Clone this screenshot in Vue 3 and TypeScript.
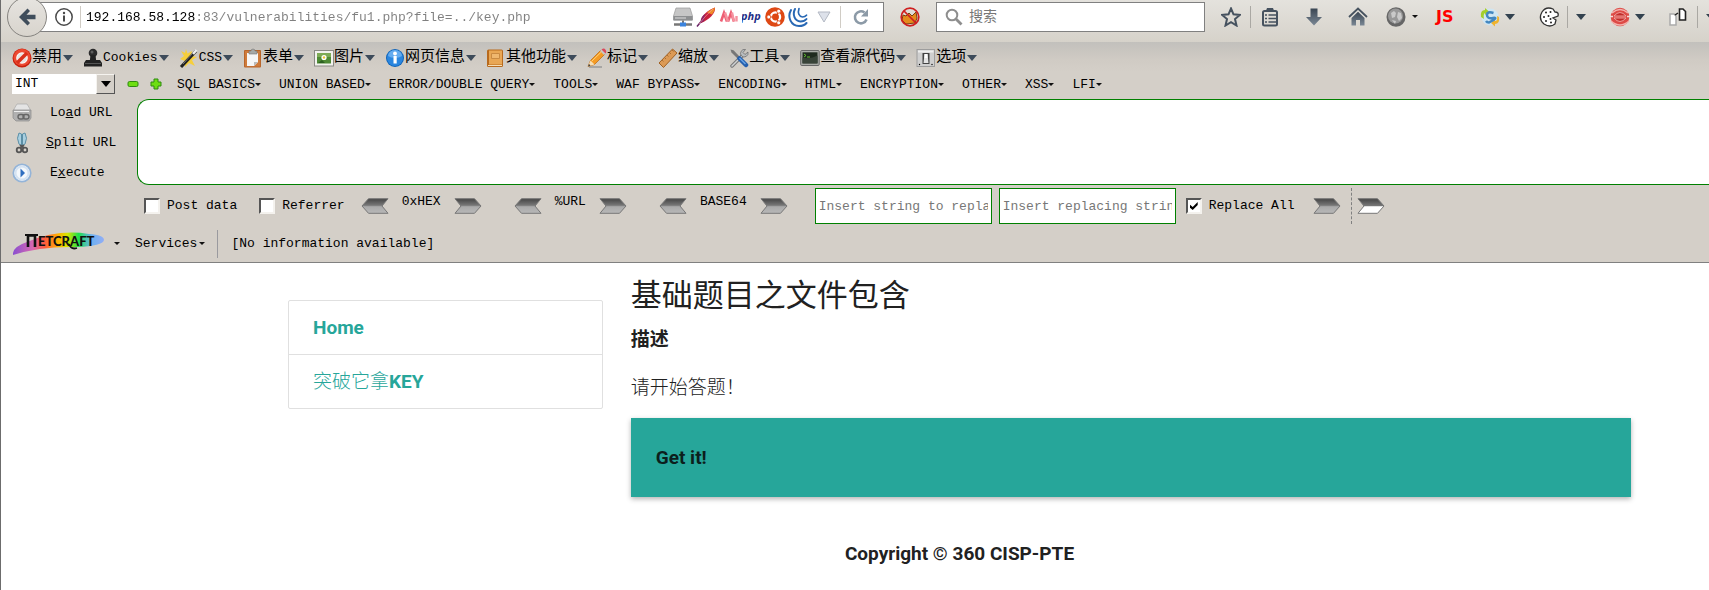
<script setup lang="ts">
import { ref } from 'vue'

interface Entry {
  label: string
  art: string
}

const address = ref('192.168.58.128:83/vulnerabilities/fu1.php?file=../key.php')
const search = ref('')
const target = ref('')
const find = ref('')
const replacement = ref('')
const dialect = ref('INT')
const postData = ref(false)
const referrer = ref(false)
const replaceAll = ref(true)

const devMenus: Entry[] = [
  {
    label: '禁用',
    art: '<circle cx="10" cy="10" r="9.5" fill="#c9200d"/><circle cx="10" cy="9.500" r="8.500" fill="#ec4a32"/><circle cx="10" cy="10" r="5.800" fill="#fff"/><circle cx="10" cy="10" r="4.800" fill="#e9e4e2"/><path d="M5 15 15 5" stroke="#d9301b" stroke-width="3.600"/>',
  },
  {
    label: 'Cookies',
    art: '<circle cx="10" cy="5" r="4.300" fill="#2b2b2b"/><path d="M7.500 7h5l.6 5H17l2 3v3.500H1V15l2-3h3.900z" fill="#222"/><path d="M2 15.500h16" stroke="#555"/><circle cx="9" cy="4" r="1.500" fill="#5d5d5d"/>',
  },
  {
    label: 'CSS',
    art: '<path d="M7 1l1.500 4.500L13 3l-1 5 6 1-5 3 3 6-6-3-4 4v-6L1 11l4-3-3-5 4 2z" fill="#f6cf3c"/><path d="M2 19 17 3" stroke="#222" stroke-width="3"/><path d="M14 6l3.500-4" stroke="#eee" stroke-width="2.500"/><path d="M4 16 13 6" stroke="#777"/>',
  },
  {
    label: '表单',
    art: '<rect x="1" y="2" width="17" height="17.500" rx="1" fill="#b8652a"/><rect x="2" y="3" width="15" height="15.500" fill="#cf7b3b"/><path d="M4 5h11v9l-4 4H4z" fill="#f6f6f6"/><path d="M11 18v-4h4z" fill="#bbb"/><path d="M6 3h2a2 2 0 0 1 4 0h2v3H6z" fill="#a7a9a6" stroke="#777" stroke-width=".6"/>',
  },
  {
    label: '图片',
    art: '<rect x=".5" y="2.500" width="19" height="15.500" fill="#f2f2ee" stroke="#8a8a84"/><rect x="3" y="5" width="14" height="10.500" fill="#4e8a35"/><path d="M3 5h14v4H3z" fill="#7dab55"/><circle cx="10" cy="9.500" r="2.600" fill="#fff"/><circle cx="10" cy="9.500" r="1.200" fill="#eac52e"/><path d="M4 15l4-3 3 3z" fill="#2c6121"/>',
  },
  {
    label: '网页信息',
    art: '<circle cx="10" cy="10" r="9" fill="#0e63b8"/><circle cx="10" cy="10" r="8" fill="#2a86df"/><path d="M3 8a7 6 0 0 1 14 0 9 5 0 0 1-14 0z" fill="#65acf0"/><rect x="8.500" y="8" width="3.200" height="7.500" fill="#fff"/><circle cx="10" cy="5.500" r="1.900" fill="#fff"/>',
  },
  {
    label: '其他功能',
    art: '<rect x="1" y="1.500" width="16" height="17.500" rx="1.500" fill="#b86a1d"/><rect x="3" y="2.500" width="13" height="14" fill="#e9a755"/><path d="M5.500 5.500h8v5h-8z" fill="#efb76f" stroke="#c98a42"/><path d="M2 17.500h14" stroke="#f7deb5"/>',
  },
  {
    label: '标记',
    art: '<path d="M2 19h13" stroke="#999" stroke-width="1.500"/><path d="M1 18.500l2.500-6L14 2l4 4L7.500 16.500z" fill="#f59b24" stroke="#b76712" stroke-width=".7"/><path d="M1 18.500l2.500-6 4 4z" fill="#f6dfb6"/><path d="M1 18.500l1-2.500 1.500 1.500z" fill="#333"/><path d="M13 3l1.500-1.500 4 4L17 7z" fill="#c7c7c7"/><path d="M14.500 1.500q2.500-2 4 .2 1.500 2 0 3.800z" fill="#da4a5c"/><path d="M5 13 14.500 3.800" stroke="#ffd277"/>',
  },
  {
    label: '缩放',
    art: '<path d="M1 15 14.500 1 19 5 5.500 19.500z" fill="#dc9a55" stroke="#a06022"/><path d="M4 12l1.500 1.500M6.500 9.500 8 11M9 7l1.500 1.500M11.500 4.500 13 6M14 2l1.500 1.500" stroke="#a86f35"/>',
  },
  {
    label: '工具',
    art: '<path d="M3 18 14 7" stroke="#777" stroke-width="3.500" stroke-linecap="round"/><path d="M3 18 14 7" stroke="#cfd2d4" stroke-width="1.500" stroke-linecap="round"/><path d="M12.500 8a4 4 0 0 1 4-6.500L14 4.500l2 2L19 4a4 4 0 0 1-6.500 4z" fill="#b7bcbf" stroke="#666" stroke-width=".7"/><path d="M1.500 1.500l3 .8 7 7.200-2 2-7-7z" fill="#777"/><path d="M10.500 10.500 17 17" stroke="#245fae" stroke-width="4.500" stroke-linecap="round"/><path d="M10.500 10 16.500 16" stroke="#67a3e6" stroke-width="1.500"/>',
  },
  {
    label: '查看源代码',
    art: '<rect x=".7" y="2.500" width="18.500" height="15" rx="1" fill="#a9aba7" stroke="#666"/><rect x="2.500" y="4.300" width="15" height="11" fill="#1f2a1f"/><path d="M2.500 9.500q8 2 15-2v8h-15z" fill="#384338"/><path d="M4 6l2 1.500L4 9M7 9h3" fill="none" stroke="#63c132"/>',
  },
  {
    label: '选项',
    art: '<rect x="1" y="1.500" width="17.500" height="17" fill="#cfcfcf" stroke="#9d9d9d"/><rect x="2" y="2.500" width="15.500" height="2" fill="#eee"/><rect x="6.500" y="5" width="7" height="11" fill="#444"/><path d="M8.500 6h3l1 9h-5z" fill="#e4e4e4"/><rect x="8.500" y="6" width="3" height="4" fill="#fff"/><circle cx="3.500" cy="16.500" r=".7"/><circle cx="16" cy="16.500" r=".7"/>',
  },
]

const identityIcons: Entry[] = [
  {
    label: 'Server',
    art: '<path d="M3 1h14l2.500 8v4H.5V9z" fill="#c6c6c6" stroke="#999" stroke-width=".7"/><path d="M.5 9h19v4.500H.5z" fill="#8d8f91"/><path d="M2 11h11" stroke="#ddd"/><path d="M1 17.500h18" stroke="#777" stroke-width="2.500"/><path d="M10 13.500v3" stroke="#777" stroke-width="2"/><rect x="7" y="15.500" width="6" height="4" fill="#3b83dd"/>',
  },
  {
    label: 'Apache',
    art: '<path d="M1 19.500Q8 10 16 3" fill="none" stroke="#6a2366" stroke-width="1.500"/><path d="M5 16C4 10 11 3 19 .5 20 6 13 13 5 16z" fill="#c8213c"/><path d="M11 5.500q4-3.500 8-5 0 4-3 7z" fill="#f08a27"/><path d="M5 16C4 12 6 9 9 7l-1 7z" fill="#8c2364"/><path d="M3 17Q9 9 17 2" fill="none" stroke="#f7a8a8" stroke-width=".6"/>',
  },
  {
    label: 'Middleware',
    art: '<path d="M2 14.500 5 6l3 8.500M9 14.500 12 6l3 8.500" fill="none" stroke="#ee5f74" stroke-width="2.600"/><path d="M6 5.500l3 9M13 5.500l2 9M17.500 9v5.500" stroke="#f5929f" stroke-width="2.400"/>',
  },
  {
    label: 'PHP',
    art: '<text x="-1" y="13" font-family="Open Sans, sans-serif" font-size="11" font-weight="700" font-style="italic" fill="#1f2e86">php</text>',
  },
  {
    label: 'Ubuntu',
    art: '<circle cx="10" cy="10" r="9.800" fill="#de4814"/><circle cx="10.500" cy="10" r="4.600" fill="none" stroke="#fff" stroke-width="2.300"/><path d="M10.500 10H4M10.500 10l4-6.500M10.500 10l4 6.500" stroke="#de4814" stroke-width="1.200"/><g fill="#fff" stroke="#de4814" stroke-width=".8"><circle cx="3.800" cy="10" r="2"/><circle cx="13.700" cy="4.200" r="2"/><circle cx="13.700" cy="15.800" r="2"/></g>',
  },
  {
    label: 'jQuery',
    art: '<g fill="none" stroke="#2868b4" stroke-linecap="round"><path d="M3 3C-1 10 3 19 11 19q5 0 7.500-3" stroke-width="2"/><path d="M7 2C4 8 7 14 12.500 14.500q4 0 6-2.500" stroke-width="2"/><path d="M11 1.500C9.500 6 11 9.500 14.500 10q2.500 0 4-1.800" stroke-width="1.700"/></g>',
  },
]

const injectMenus: string[] = [
  'SQL BASICS', 'UNION BASED', 'ERROR/DOUBLE QUERY', 'TOOLS', 'WAF BYPASS',
  'ENCODING', 'HTML', 'ENCRYPTION', 'OTHER', 'XSS', 'LFI',
]

const encoders: string[] = ['0xHEX', '%URL', 'BASE64']
</script>

<template>
  <div class="window">
    <svg class="defs" width="0" height="0" aria-hidden="true">
      <defs>
        <linearGradient id="metal" x1="0" y1="0" x2="0" y2="1">
          <stop offset="0" stop-color="#444" />
          <stop offset="0.450" stop-color="#777" />
          <stop offset="0.550" stop-color="#aaa" />
          <stop offset="1" stop-color="#b8b8b8" />
        </linearGradient>
        <linearGradient id="chrome" x1="0" y1="0" x2="0" y2="1">
          <stop offset="0" stop-color="#444" />
          <stop offset="0.480" stop-color="#777" />
          <stop offset="0.550" stop-color="#fff" />
          <stop offset="1" stop-color="#fff" />
        </linearGradient>
        <linearGradient id="slate" x1="0" y1="0" x2="0" y2="1">
          <stop offset="0" stop-color="#3a4653" />
          <stop offset="1" stop-color="#7b8895" />
        </linearGradient>
        <linearGradient id="rainbow">
          <stop offset="0" stop-color="#8a4fd0" />
          <stop offset="0.220" stop-color="#d868b0" />
          <stop offset="0.350" stop-color="#ff5a3c" />
          <stop offset="0.500" stop-color="#ffb400" />
          <stop offset="0.600" stop-color="#d4e600" />
          <stop offset="0.720" stop-color="#1ee04a" />
          <stop offset="0.860" stop-color="#6bb0f0" />
          <stop offset="1" stop-color="#93aef5" />
        </linearGradient>
      </defs>
    </svg>

    <header class="chrome">
      <nav class="navbar">
        <button class="back" aria-label="Back">
          <svg viewBox="0 0 20 20" width="20" height="20"><path d="M2 10 10.500 1.500 13 4 9.500 7.800H18.500v4.400H9.500L13 16l-2.500 2.500z" fill="#3f4d5b" /></svg>
        </button>
        <div class="urlbar">
          <svg class="info" viewBox="0 0 20 20" width="20" height="20">
            <circle cx="10" cy="10" r="8.200" fill="none" stroke="#4a4a4a" stroke-width="1.500" />
            <path d="M10 8.500v6" stroke="#4a4a4a" stroke-width="2" /><circle cx="10" cy="6" r="1.200" fill="#4a4a4a" />
          </svg>
          <span class="rule"></span>
          <input v-model="address" class="address" aria-label="Address" spellcheck="false" />
          <div class="identity">
            <svg v-for="i in identityIcons" :key="i.label" viewBox="0 0 20 20" width="20" height="20" v-html="i.art"></svg>
          </div>
          <svg class="history" viewBox="0 0 14 12" width="14" height="12"><path d="M1 1h12L7 11z" fill="#dde1ea" stroke="#b4b9c4" /></svg>
          <span class="rule"></span>
          <button class="reload" aria-label="Reload">
            <svg viewBox="0 0 18 18" width="18" height="18">
              <path d="M14.500 11.500A6 6 0 1 1 12.500 4.500" fill="none" stroke="#8c9aa7" stroke-width="2.600" />
              <path d="M16 1v7.500H9z" fill="#8c9aa7" />
            </svg>
          </button>
        </div>
        <button class="blocker" aria-label="Blocked">
          <svg viewBox="0 0 20 20" width="20" height="20">
            <path d="M3 8l3 1 3-3 3 3 4-4 1 6-2 5-9 1-4-4z" fill="#e58a1c" stroke="#7b3f10" />
            <circle cx="10" cy="10" r="8.800" fill="none" stroke="#cf1f1f" stroke-width="1.700" /><path d="M4 4l12 12" stroke="#cf1f1f" stroke-width="1.700" />
          </svg>
        </button>
        <label class="search">
          <svg viewBox="0 0 18 18" width="18" height="18"><circle cx="7" cy="7" r="5.300" fill="none" stroke="#8e8e8e" stroke-width="2" /><path d="M11 11l5.500 5.500" stroke="#8e8e8e" stroke-width="2.800" /></svg>
          <input v-model="search" placeholder="搜索" aria-label="搜索" />
        </label>

        <div class="tools">
          <div class="group wide">
            <button aria-label="Bookmark"><svg viewBox="0 0 20 20" width="20" height="20"><path d="M10 1.500l2.500 5.800 6.300.6-4.800 4.200 1.500 6.400L10 15.200l-5.500 3.300L6 12.100 1.200 7.900l6.300-.6z" fill="none" stroke="#46525f" stroke-width="2" /></svg></button>
            <span class="rule dark"></span>
            <button aria-label="Bookmarks list"><svg viewBox="0 0 20 20" width="20" height="20"><rect x="3" y="4" width="14" height="14.500" rx="1.500" fill="none" stroke="#46525f" stroke-width="2" /><path d="M7 1h6l1.500 4h-9z" fill="#46525f" /><path d="M5 8h2M8.500 8H16M5 11.500h2M8.500 11.500H16M5 15h2M8.500 15H16" stroke="#46525f" stroke-width="1.700" /></svg></button>
          </div>
          <button aria-label="Downloads"><svg viewBox="0 0 20 20" width="20" height="20"><path d="M6.500 1.500h7V10H18l-8 8.500L2 10h4.500z" fill="url(#slate)" /></svg></button>
          <button aria-label="Home"><svg viewBox="0 0 20 20" width="20" height="20"><path d="M1 10 10 1.500 19 10" fill="none" stroke="#46525f" stroke-width="1.800" /><path d="M3.500 11 10 4.800 16.500 11v7.500H12V13H8v5.500H3.500z" fill="url(#slate)" /></svg></button>
          <div class="group snug">
            <button aria-label="Proxy"><svg viewBox="0 0 20 20" width="20" height="20"><ellipse cx="10" cy="10" rx="9.500" ry="9.800" fill="#666" /><ellipse cx="9.500" cy="9" rx="7.500" ry="7.500" fill="#989898" /><path d="M5 6l3-2 2 2-1 4-3 1zM12 5l3 1 1 5-3 3-2-4zM6 13l4 1-1 3z" fill="#c9c9c9" /></svg></button>
            <svg viewBox="0 0 6 4" width="6" height="4"><path d="M0 0h6L3 3z" fill="#111" /></svg>
          </div>
          <button class="snug js">JS</button>
          <div class="group tight">
            <button aria-label="Sync"><svg viewBox="0 0 20 20" width="20" height="20"><circle cx="10" cy="10" r="8.500" fill="#cfe6f3" /><path d="M1 10Q0 3 5 3l0-2 4 3.500L5 8V6Q3 7 4 12z" fill="#a4cf2b" /><path d="M19 10q1 7-4 7v2.500L11 16l4-3.500V14q3 0 2-5z" fill="#f0b32d" /><path d="M13.500 6Q7 4 7 8t6 3-4 4.500q-2 0-3-1.500" fill="none" stroke="#4387c0" stroke-width="2.500" /></svg></button>
            <svg viewBox="0 0 10 6" width="10" height="6"><path d="M0 0h10L5 6z" fill="#33424f" /></svg>
          </div>
          <div class="group">
            <button aria-label="Cookies"><svg viewBox="0 0 20 20" width="20" height="20"><path d="M14 2Q7-1 3 5-1 12 5 17q6 4 11 0l1-4-3-2 5-2q1-4-3-4z" fill="#fff" stroke="#333" stroke-width="1.300" /><g fill="#222"><circle cx="7" cy="5.500" r="1" /><circle cx="11.500" cy="5" r="1" /><circle cx="5" cy="10" r="1" /><circle cx="9.500" cy="9" r="1" /><circle cx="7" cy="14" r="1" /><circle cx="12" cy="15.500" r="1" /><circle cx="11.500" cy="12" r="1" /></g></svg></button>
            <span class="rule dark"></span>
            <svg viewBox="0 0 10 6" width="10" height="6"><path d="M0 0h10L5 6z" fill="#33424f" /></svg>
          </div>
          <div class="group tight">
            <button aria-label="Abuse report"><svg viewBox="0 0 20 20" width="20" height="20"><circle cx="10" cy="10" r="9.300" fill="#dd4b46" /><path d="M2 6q8-7 16 0M1 14q9 8 18 0" fill="none" stroke="#f4b3ae" stroke-width="1.500" /><path d="M0 9.500h3M17 9.500h3" stroke="#f5dedb" stroke-width="1.500" /><path d="M4 9q6-7 12 0zM4 11h12q-6 7-12 0z" fill="#c22c29" stroke="#f4b3ae" stroke-width=".8" /></svg></button>
            <svg viewBox="0 0 10 6" width="10" height="6"><path d="M0 0h10L5 6z" fill="#33424f" /></svg>
          </div>
          <div class="group">
            <button aria-label="Copy pages"><svg viewBox="0 0 20 20" width="20" height="20"><path d="M1 7h4l2 2v9H1z" fill="#fff" stroke="#aaa" stroke-width="1.500" /><path d="M10.500 2H14l2.500 2.500V13h-6z" fill="#fff" stroke="#222" stroke-width="1.600" /><path d="M6 8l3-2" stroke="#222" stroke-width="1.500" /></svg></button>
            <span class="rule dark"></span>
            <svg viewBox="0 0 10 6" width="10" height="6"><path d="M0 0h10L5 6z" fill="#33424f" /></svg>
          </div>
        </div>
      </nav>

      <div class="devbar">
        <button v-for="m in devMenus" :key="m.label">
          <svg viewBox="0 0 20 20" width="20" height="20" v-html="m.art"></svg>
          <span :class="{ cjk: m.label.charCodeAt(0) > 255 }">{{ m.label }}</span>
          <svg class="drop" viewBox="0 0 10 6" width="10" height="6"><path d="M0 0h10L5 6z" fill="#3d4b5a" /></svg>
        </button>
      </div>

      <div class="injectbar">
        <div class="picker">
          <select v-model="dialect" aria-label="Dialect">
            <option>INT</option>
          </select>
          <span class="picker-arrow"><svg viewBox="0 0 10 6" width="10" height="6"><path d="M0 0h10L5 6z" fill="#000" /></svg></span>
        </div>
        <button class="step" aria-label="Decrease"><svg viewBox="0 0 12 12" width="12" height="12"><rect x="1" y="3.500" width="10" height="5" rx="1.500" fill="#6ede12" stroke="#2f8a10" /></svg></button>
        <button class="step" aria-label="Increase"><svg viewBox="0 0 12 12" width="12" height="12"><path d="M4 1h4v3h3v4H8v3H4V8H1V4h3z" fill="#6ede12" stroke="#2f8a10" stroke-linejoin="round" /></svg></button>
        <div class="menus">
          <button v-for="m in injectMenus" :key="m">{{ m }}<svg viewBox="0 0 6 4" width="6" height="4"><path d="M0 0h6L3 3z" fill="#111" /></svg></button>
        </div>
      </div>

      <div class="request">
        <div class="actions">
          <button>
            <svg viewBox="0 0 20 20" width="20" height="20"><path d="M5 1h10l3 5v4H2V6z" fill="#e4e4e4" stroke="#aaa" stroke-width=".7" /><path d="M1 7h18v8l-2 3H4l-3-3z" fill="#b0b0b0" stroke="#8a8a8a" stroke-width=".7" /><path d="M2 8.500h15" stroke="#eee" /><g fill="none" stroke="#666" stroke-width="1.400"><rect x="6" y="11.500" width="6" height="4.500" rx="2.200" /><rect x="11" y="11.500" width="6" height="4.500" rx="2.200" /></g></svg>
            <span>Lo<u>a</u>d URL</span>
          </button>
          <button>
            <svg viewBox="-1 0 16 22" width="16" height="22"><path d="M6 1q-3 5 0 11l2.500 2V2zM12 1q3 5 0 11l-2.500 2V2z" fill="#a9cfe0" stroke="#5c8fa6" /><g fill="none" stroke="#555" stroke-width="1.800"><circle cx="6" cy="18" r="2.300" /><circle cx="12" cy="18" r="2.300" /><path d="M7 16l4-3M11 16l-4-3" /></g></svg>
            <span><u>S</u>plit URL</span>
          </button>
          <button>
            <svg viewBox="0 0 20 20" width="20" height="20"><circle cx="10" cy="10" r="8.700" fill="#f4f8fc" stroke="#94b4d8" stroke-width="1.800" /><circle cx="10" cy="10" r="6.500" fill="none" stroke="#d5e3f2" stroke-width="2" /><path d="M8.500 5.500 13 10l-4.500 4.500z" fill="#2f6fc0" /></svg>
            <span>E<u>x</u>ecute</span>
          </button>
        </div>
        <textarea v-model="target" aria-label="Request URL"></textarea>
      </div>

      <div class="options">
        <label class="check"><input v-model="postData" type="checkbox" />Post data</label>
        <label class="check"><input v-model="referrer" type="checkbox" />Referrer</label>
        <div class="encoders">
          <div v-for="e in encoders" :key="e" class="encoder">
            <button :aria-label="'Decode ' + e"><svg viewBox="0 0 28 16" width="28" height="16"><path d="M1 8 7.500.7H27L21 8l6 7.300H7.500z" fill="url(#metal)" stroke="#777" /></svg></button>
            <span>{{ e }}</span>
            <button :aria-label="'Encode ' + e"><svg viewBox="0 0 28 16" width="28" height="16"><path d="M27 8 20.500.7H1L7 8l-6 7.300h19.500z" fill="url(#metal)" stroke="#777" /></svg></button>
          </div>
        </div>
        <input v-model="find" class="field" placeholder="Insert string to replace" aria-label="String to replace" />
        <input v-model="replacement" class="field" placeholder="Insert replacing string" aria-label="Replacing string" />
        <label class="check all"><input v-model="replaceAll" type="checkbox" />Replace All</label>
        <button class="apply" aria-label="Replace"><svg viewBox="0 0 28 16" width="28" height="16"><path d="M27 8 20.500.7H1L7 8l-6 7.300h19.500z" fill="url(#metal)" stroke="#777" /></svg></button>
        <span class="dashes"></span>
        <button aria-label="More"><svg viewBox="0 0 28 16" width="28" height="16"><path d="M27 8 20.500.7H1L7 8l-6 7.300h19.500z" fill="url(#chrome)" stroke="#777" /></svg></button>
      </div>

      <div class="netcraft">
        <button class="logo" aria-label="Netcraft">
          <svg viewBox="0 0 92 24" width="92" height="24">
            <path d="M0 23Q-1 15 14 10 45-3 76 2q15 1 15 6-1 6-27 7Q28 14 0 23z" fill="url(#rainbow)" />
            <path d="M15 15V3.500h7V15" fill="none" stroke="#111" stroke-width="2.600" /><path d="M12 3h13" stroke="#111" stroke-width="2" />
            <text x="25" y="14" font-family="Lato, sans-serif" font-size="13" font-weight="900" fill="#111">ETCRAFT</text>
            <path d="M56 12q2 6 8 4" fill="none" stroke="#111" stroke-width="1.800" />
          </svg>
          <svg viewBox="0 0 6 4" width="6" height="4"><path d="M0 0h6L3 3z" fill="#111" /></svg>
        </button>
        <button class="services">Services<svg viewBox="0 0 6 4" width="6" height="4"><path d="M0 0h6L3 3z" fill="#111" /></svg></button>
        <span class="divider"></span>
        <span>[No information available]</span>
      </div>
    </header>

    <main class="page">
      <aside>
        <ul class="collection">
          <li><a href="#home">Home</a></li>
          <li><a href="#key"><span class="plain">突破它拿</span>KEY</a></li>
        </ul>
      </aside>
      <article>
        <h1>基础题目之文件包含</h1>
        <h2>描述</h2>
        <p lang="zh-Hans">请开始答题！</p>
        <div class="panel">Get it!</div>
      </article>
      <footer>Copyright © 360 CISP-PTE</footer>
    </main>
  </div>
</template>

<style>
body {
  margin: 0;
  background: #fff;
}
</style>

<style scoped>
.window {
  box-sizing: border-box;
  min-height: 100vh;
  border-left: 1px solid #6c6c6c;
  overflow: hidden;
}
.defs {
  position: absolute;
}
.chrome {
  background: #d4cfc8;
  border-bottom: 1px solid #808080;
  color: #000;
  font: 13px/16px "Liberation Mono", "Noto Sans CJK SC", monospace;
}
svg {
  display: block;
  flex: none;
}
button {
  display: flex;
  align-items: center;
  flex: none;
  padding: 0;
  border: 0;
  background: none;
  color: inherit;
  font: inherit;
  white-space: pre;
}
input,
select,
textarea {
  box-sizing: border-box;
  min-width: 0;
  margin: 0;
  padding: 0;
  border: 0;
  border-radius: 0;
  outline: 0;
  background: none;
  color: #000;
  font: inherit;
}
input::placeholder {
  color: #777;
  opacity: 1;
}
.rule {
  flex: none;
  width: 1px;
  height: 22px;
  background: #d0ccc5;
}
.rule.dark {
  background: #aaa8a3;
}

.navbar {
  display: flex;
  align-items: center;
  height: 34px;
  padding: 0 0 8px 6px;
  background: linear-gradient(#e4e2dd, #d6d2ca);
}
.back {
  position: relative;
  justify-content: center;
  box-sizing: border-box;
  width: 40px;
  height: 40px;
  border: 1px solid #85837f;
  border-radius: 50%;
  background: linear-gradient(#e6e4e0, #d8d4cd);
}
.urlbar {
  display: flex;
  flex: 1;
  align-items: center;
  box-sizing: border-box;
  min-width: 0;
  height: 30px;
  margin-left: -12px;
  padding: 0 13px 0 18px;
  border: 1px solid #808080;
  background: #fff;
}
.info {
  margin-right: 6px;
}
.address {
  flex: 1;
  height: 24px;
  margin-left: 5px;
  background: linear-gradient(to right, #000 14ch, #808080 14ch);
  background-clip: text;
  -webkit-background-clip: text;
  color: transparent;
}
.identity {
  display: flex;
  gap: 3px;
}
.history {
  margin: 0 9px 0 9px;
}
.reload {
  margin-left: 11px;
}
.blocker {
  margin: 0 16px;
}
.search {
  display: flex;
  flex: 0 1 269px;
  align-items: center;
  gap: 6px;
  box-sizing: border-box;
  height: 30px;
  padding: 0 8px;
  border: 1px solid #808080;
  background: #fff;
}
.search input {
  flex: 1;
  font-size: 14px;
}
.tools {
  display: flex;
  flex: 0 0 488px;
  gap: 24px;
  align-items: center;
  margin-left: 16px;
  overflow: hidden;
}
.group {
  display: flex;
  flex: none;
  gap: 8px;
  align-items: center;
}
.group.wide {
  gap: 9px;
}
.group.tight {
  gap: 5px;
}
.group.snug {
  gap: 6px;
}
.snug {
  margin-left: -6px;
}
.js {
  width: 20px;
  color: #f00;
  font: 700 16px/20px "DejaVu Sans", sans-serif;
}

.devbar {
  display: flex;
  gap: 10px;
  align-items: center;
  box-sizing: border-box;
  height: 30px;
  padding: 1px 0 0 11px;
  background: linear-gradient(#c2c0bc, #d0cbc4 60%, #d4cfc8);
}
.cjk {
  font-size: 15px;
}
.drop {
  margin-left: 1px;
}

.injectbar {
  display: flex;
  align-items: center;
  height: 24px;
  padding-left: 11px;
}
.picker {
  position: relative;
  display: flex;
  width: 103px;
  height: 20px;
  margin-right: 12px;
  background: #fff;
}
.picker select {
  flex: 1;
  padding-left: 3px;
  appearance: none;
}
.picker-arrow {
  position: absolute;
  inset: 0 0 0 auto;
  display: grid;
  place-items: center;
  box-sizing: border-box;
  width: 19px;
  border: 1px solid;
  border-color: #f5f3ef #555 #555 #f5f3ef;
  background: #d4cfc8;
  pointer-events: none;
}
.step {
  margin-right: 11px;
}
.menus {
  display: flex;
  gap: 18px;
  margin-left: 4px;
  padding-top: 2px;
}

.request {
  display: flex;
  padding: 2px 0 0 11px;
}
.actions {
  display: flex;
  flex: none;
  flex-direction: column;
  align-items: flex-start;
  width: 125px;
}
.actions button {
  height: 30px;
}
.actions span {
  margin-left: 18px;
}
.request textarea {
  flex: 1;
  height: 86px;
  margin-top: 1px;
  border: 1px solid #008000;
  border-right: 0;
  border-radius: 12px 0 0 12px;
  background: #fff;
  resize: none;
}

.options {
  display: flex;
  align-items: center;
  height: 36px;
  padding-left: 143px;
}
.check {
  display: flex;
  flex: none;
  gap: 7px;
  align-items: center;
  margin-right: 22px;
}
.check input {
  display: grid;
  place-items: center;
  width: 16px;
  height: 16px;
  border: 2px solid;
  border-color: #555 #f4f2ee #f4f2ee #555;
  background: #fff;
  appearance: none;
}
.check input:checked::after {
  width: 8px;
  height: 8px;
  background: #000;
  clip-path: polygon(0 30%, 38% 62%, 100% 0, 100% 38%, 38% 100%, 0 68%);
  content: "";
}
.encoders {
  display: flex;
  flex: none;
  gap: 32px;
  margin: 0 27px 0 -6px;
}
.encoder {
  display: flex;
  gap: 13px;
  align-items: center;
}
.encoder span {
  padding-bottom: 8px;
}
.field {
  flex: 0 1 177px;
  height: 36px;
  margin-right: 7px;
  padding: 0 3px;
  border: 1px solid #008000;
  background: #fff;
}
.check.all {
  margin: 0 18px 0 3px;
}
.dashes {
  height: 36px;
  margin: 0 5px 0 10px;
  border-left: 1px dashed #808080;
}

.netcraft {
  display: flex;
  align-items: center;
  box-sizing: border-box;
  height: 38px;
  padding: 2px 0 0 12px;
}
.logo {
  gap: 9px;
  margin-right: 15px;
}
.services {
  gap: 2px;
}
.divider {
  width: 1px;
  height: 28px;
  margin: 0 13px 0 12px;
  background: #9a9a9f;
}

.page {
  display: grid;
  grid-template-columns: 3fr 9fr;
  margin: 0 64px 0 273px;
  color: #212121;
  font: 700 19px/28px Roboto, "Noto Sans CJK SC", sans-serif;
}
aside {
  padding: 37px 14px 0;
}
.collection {
  margin: 0;
  padding: 0;
  border: 1px solid #e0e0e0;
  border-radius: 2px;
  list-style: none;
}
.collection li + li {
  border-top: 1px solid #e0e0e0;
}
.collection a {
  display: block;
  height: 28px;
  padding: 13px 24px 12px;
  color: #26a69a;
  text-decoration: none;
}
.plain {
  font-weight: 300;
}
article {
  padding: 16px 14px 0;
}
h1 {
  margin: 0 0 13px;
  font-size: 31px;
  font-weight: 400;
  line-height: 34px;
}
h2 {
  margin: 0 0 18px;
  font-size: 19px;
}
p {
  margin: 0 0 18px;
  font-family: "Noto Sans CJK TC", sans-serif;
  font-weight: 300;
}
.panel {
  padding: 26px 25px 25px;
  background: #26a69a;
  box-shadow: 0 2px 5px rgba(0, 0, 0, 0.3);
  color: #0c1f1d;
}
footer {
  grid-column: 1 / -1;
  padding: 43px 0 21px;
  text-align: center;
}
</style>
